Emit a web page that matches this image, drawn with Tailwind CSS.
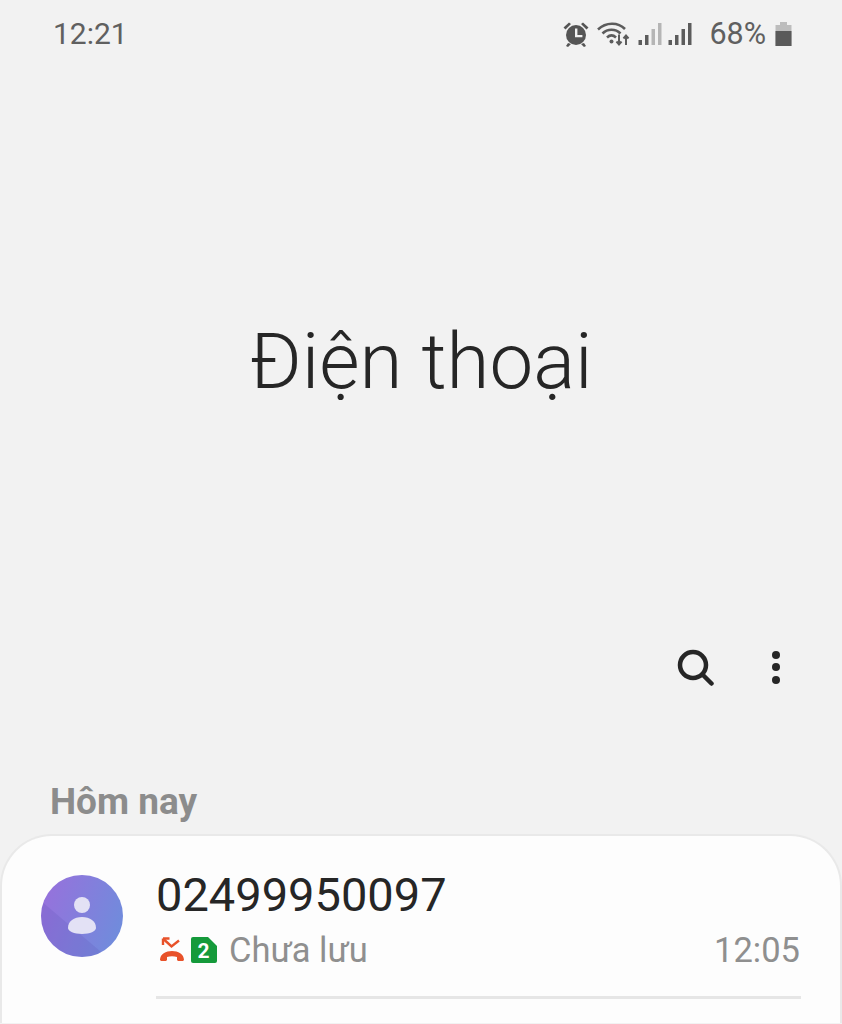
<!DOCTYPE html>
<html lang="vi">
<head>
  <meta charset="UTF-8" />
  <meta name="viewport" content="width=device-width, initial-scale=1.0" />
  <title>Điện thoại</title>
  <script src="https://cdn.jsdelivr.net/npm/@tailwindcss/browser@4"></script>
</head>
<body class="bg-[#f2f2f2] font-[Roboto,sans-serif] h-[1024px] overflow-hidden">
  <!-- status bar -->
  <div class="h-[68px] pl-[53px] pr-[50px] flex items-center justify-between text-[#606060] text-[30px]">
    <span class="leading-none">12:21</span>
    <div class="flex items-center">
      <svg class="w-[28px] h-[28px] mr-[7px]" viewBox="0 0 28 28" fill="#555"><circle cx="14" cy="15" r="10"/><path d="M1.500 7.500 7 2.500l2 1.500-5.500 5.500zM26.500 7.500 21 2.500l-2 1.500 5.500 5.500zM6 23l-2 3 2 1 3-3zM22 23l2 3-2 1-3-3z"/><path d="M13 8.500h2.400v6.500h5v2.300H13z" fill="#f2f2f2"/></svg>
      <svg class="w-[34px] h-[28px]" viewBox="0 0 34 28" fill="none" stroke="#5c5c5c" stroke-width="2.600"><path d="M1 9.500C9 2 21 2 28 9"/><path d="M5.500 13.500c5-5 13-5 18 0"/><path d="M10 17.500c3-2.700 6-2.700 9 0"/><circle cx="14.500" cy="21.500" r="2" fill="#5c5c5c" stroke="none"/><path d="M22 14.500v10M19.500 21.500l2.500 3 2.500-3M29 25V15.500M26.500 18.500l2.500-3 2.500 3" stroke-width="2"/></svg>
      <svg class="w-[24px] h-[26px] ml-[7px]" viewBox="0 0 24 26"><rect x=".5" y="19" width="3.500" height="5" fill="#5c5c5c"/><rect x="7" y="14" width="3.500" height="10" fill="#5c5c5c"/><rect x="13.500" y="8" width="3.500" height="16" fill="#b5b5b5"/><rect x="20" y="2" width="3.500" height="22" fill="#b5b5b5"/></svg>
      <svg class="w-[24px] h-[26px] ml-[6px]" viewBox="0 0 24 26" fill="#5c5c5c"><rect x=".5" y="19" width="3.500" height="5"/><rect x="7" y="14" width="3.500" height="10"/><rect x="13.500" y="8" width="3.500" height="16"/><rect x="20" y="2" width="3.500" height="22"/></svg>
      <span class="ml-[17px] leading-none text-[30.500px]">68%</span>
      <svg class="w-[17px] h-[26px] ml-[9px]" viewBox="0 0 17 26"><path d="M5 1h7v3h4.500v21H.5V4H5z" fill="#bdbdbd"/><rect x=".5" y="10" width="16" height="15" fill="#5a5a5a"/></svg>
    </div>
  </div>

  <!-- title -->
  <div class="h-[565px] flex justify-center pt-[248px]">
    <h1 class="text-[78px] font-light text-[#262626] leading-[92px] h-[92px]">Điện thoại</h1>
  </div>

  <!-- actions -->
  <div class="h-[68px] flex items-center justify-end pr-[62px]">
    <svg class="w-[37px] h-[37px]" viewBox="0 0 37 37" fill="none" stroke="#262626" stroke-width="4.500"><circle cx="16" cy="16" r="13"/><path d="M26 26l8.500 8.500" stroke-linecap="round"/></svg>
    <div class="ml-[58px] flex flex-col gap-[4.500px] items-center">
      <span class="w-[8px] h-[8px] rounded-full bg-[#262626]"></span>
      <span class="w-[8px] h-[8px] rounded-full bg-[#262626]"></span>
      <span class="w-[8px] h-[8px] rounded-full bg-[#262626]"></span>
    </div>
  </div>

  <!-- section heading -->
  <div class="pl-[50px] mt-[80px] h-[42px] text-[37px] font-bold text-[#8c8c8c] leading-[42px]">Hôm nay</div>

  <!-- call log card -->
  <div class="mt-[11px] h-[189px] bg-[#fdfdfd] rounded-t-[52px] border-t-2 border-x-2 border-[#e9e9e9] flex pl-[39px] pr-[39px] pt-[39px] overflow-hidden">
    <div class="relative w-[82px] h-[82px] rounded-full bg-[linear-gradient(110deg,#9a6fdc,#6b8fdc)] overflow-hidden shrink-0 flex items-center justify-center">
      <svg class="w-[82px] h-[82px]" viewBox="0 0 82 82"><path d="M0 26 66 82H0z" fill="#5b4bb0" fill-opacity=".18"/><circle cx="41" cy="30" r="8" fill="#e3e1f5"/><path d="M27 53c0-7 6-11 14-11s14 4 14 11c0 3-6 6-14 6s-14-3-14-6z" fill="#e3e1f5"/></svg>
    </div>
    <div class="ml-[33px] flex-1">
      <div class="text-[47px] leading-[46px] text-[#262626] mt-[-3px]">02499950097</div>
      <div class="flex items-center mt-[10px] h-[44px]">
        <svg class="w-[26px] h-[26px] ml-[3px]" viewBox="0 0 26 26" fill="none"><path d="M5 2.500l7.500 7 7.500-6" stroke="#e8522a" stroke-width="2.400"/><path d="M4 1.500v6.500M4 1.500h6.500" stroke="#e8522a" stroke-width="2.400"/><path d="M1 23c0-6 6-9 12-9s12 3 12 9l-1 1h-5l-1-1v-3c-3-1-7-1-10 0v3l-1 1H2z" fill="#e8522a"/></svg>
        <svg class="w-[26px] h-[26px] ml-[6px]" viewBox="0 0 26 26"><path d="M2 0h15l9 9v15a2 2 0 0 1-2 2H2a2 2 0 0 1-2-2V2a2 2 0 0 1 2-2z" fill="#159a3b"/><text x="12.500" y="21" text-anchor="middle" font-family="Roboto" font-weight="700" font-size="21" fill="#fff">2</text></svg>
        <span class="ml-[12px] text-[34.500px] text-[#8f8f8f] leading-none">Chưa lưu</span>
        <span class="ml-auto mr-[1px] text-[34.500px] text-[#8f8f8f] leading-none">12:05</span>
      </div>
      <div class="mt-[24px] h-[3px] bg-[#e6e6e6]"></div>
    </div>
  </div>
</body>
</html>
